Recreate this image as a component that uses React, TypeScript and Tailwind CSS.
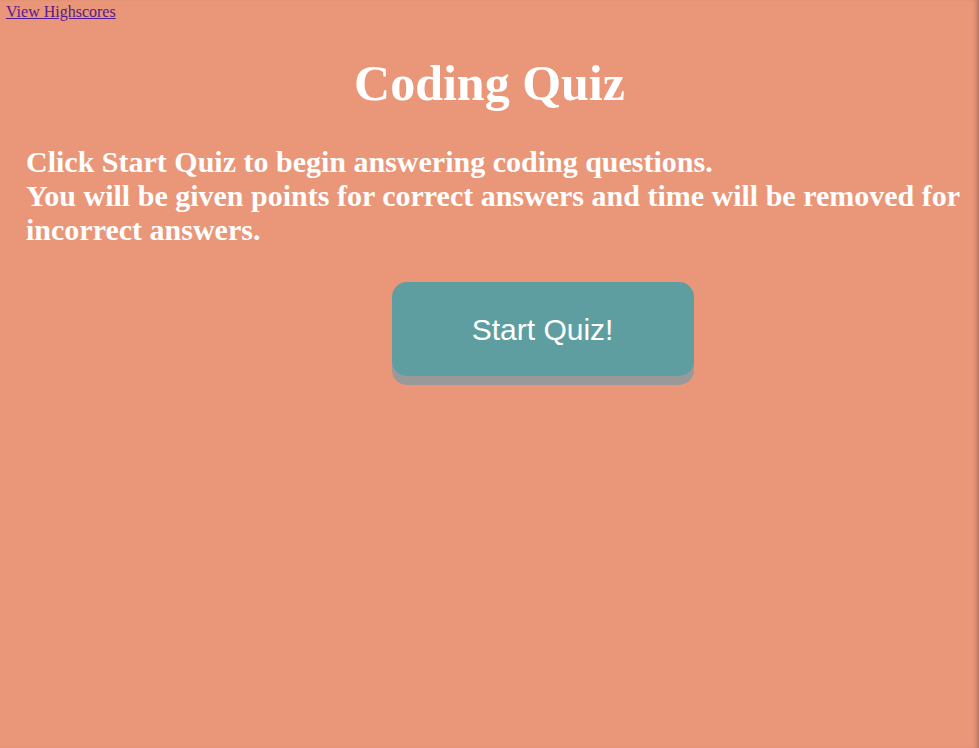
export default function App() {
  return (
    <div className="min-h-[748px] bg-[#ea9679] font-['Liberation_Serif',serif] shadow-[inset_-5px_0_5px_-3px_rgba(0,0,0,0.25)]">
      <nav className="pl-[6px]">
        <a href="#" className="text-[16px] leading-[18px] text-[#551a8b] underline">
          View Highscores
        </a>
      </nav>

      <h1 className="mt-[31px] text-center text-[50px] font-bold leading-[57px] text-white">
        Coding Quiz
      </h1>

      <div className="mt-[33px] pl-[26px] pr-[16px] text-[30px] font-bold leading-[34px] text-white">
        <p>Click Start Quiz to begin answering coding questions.</p>
        <p>
          You will be given points for correct answers and time will be removed for incorrect
          answers.
        </p>
      </div>

      <button className="ml-[40%] mt-[35px] h-[94px] w-[302px] rounded-[15px] bg-[#5f9ea0] font-['Liberation_Sans',sans-serif] text-[30px] text-white shadow-[0_9px_#999]">
        Start Quiz!
      </button>
    </div>
  );
}
